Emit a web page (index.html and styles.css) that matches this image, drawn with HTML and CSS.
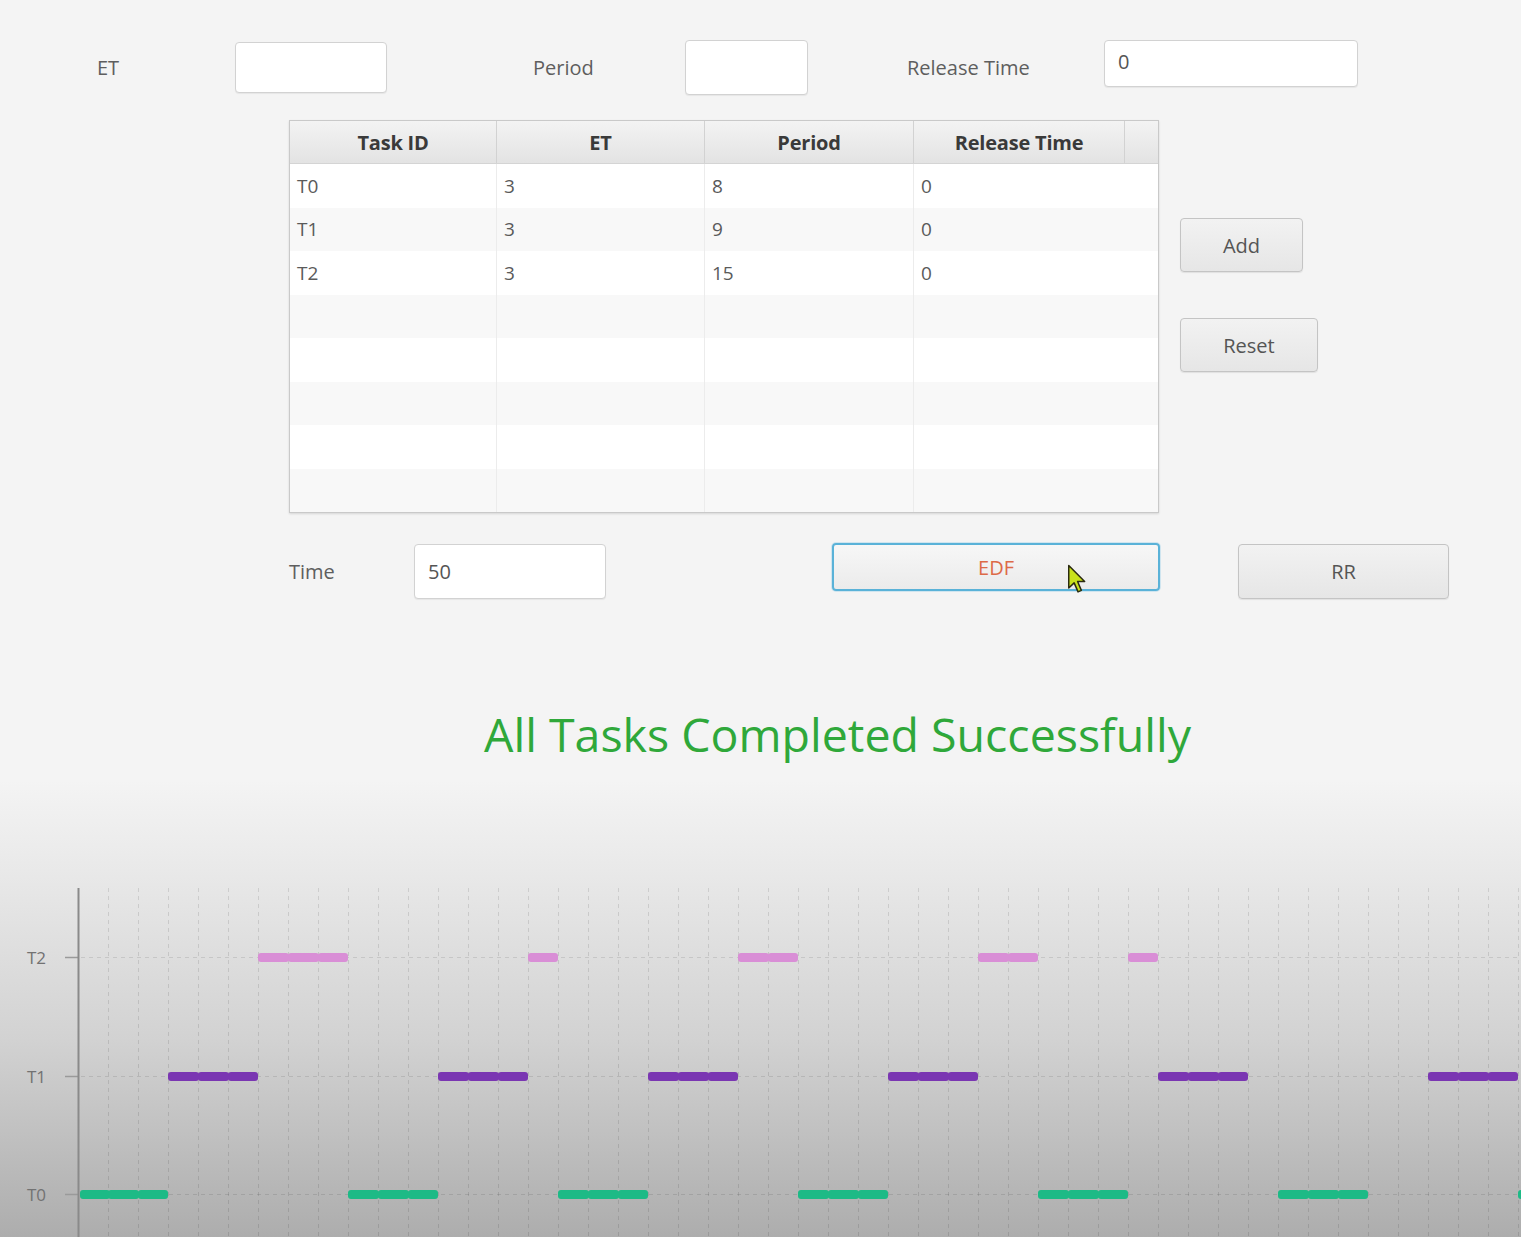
FILE: index.html
```html
<!DOCTYPE html>
<html>
<head>
<meta charset="utf-8">
<title>EDF Scheduler</title>
<link rel="stylesheet" href="styles.css">
</head>
<body>
<div class="app">
  <div class="row-top">
    <span class="lbl lbl-et">ET</span>
    <div class="field f-et"></div>
    <span class="lbl lbl-period">Period</span>
    <div class="field f-period"></div>
    <span class="lbl lbl-release">Release Time</span>
    <div class="field f-release">0</div>
  </div>

  <div class="row-table">
    <div class="table">
      <div class="thead">
        <div class="th">Task ID</div>
        <div class="th">ET</div>
        <div class="th">Period</div>
        <div class="th">Release Time</div>
        <div class="th th-fill"></div>
      </div>
      <div class="tr"><div class="td">T0</div><div class="td">3</div><div class="td">8</div><div class="td">0</div></div>
      <div class="tr odd"><div class="td">T1</div><div class="td">3</div><div class="td">9</div><div class="td">0</div></div>
      <div class="tr"><div class="td">T2</div><div class="td">3</div><div class="td">15</div><div class="td">0</div></div>
      <div class="tr odd"><div class="td"></div><div class="td"></div><div class="td"></div><div class="td"></div></div>
      <div class="tr"><div class="td"></div><div class="td"></div><div class="td"></div><div class="td"></div></div>
      <div class="tr odd"><div class="td"></div><div class="td"></div><div class="td"></div><div class="td"></div></div>
      <div class="tr"><div class="td"></div><div class="td"></div><div class="td"></div><div class="td"></div></div>
      <div class="tr odd"><div class="td"></div><div class="td"></div><div class="td"></div><div class="td"></div></div>
    </div>
    <div class="side">
      <button class="btn btn-add">Add</button>
      <button class="btn btn-reset">Reset</button>
    </div>
  </div>

  <div class="row-time">
    <span class="lbl lbl-time">Time</span>
    <div class="field f-time">50</div>
    <div class="edf-wrap">
      <button class="btn btn-edf">EDF</button>
      <svg class="cursor" width="20" height="30" viewBox="0 0 13 20">
        <path d="M1 1 L1 16 L4.6 12.6 L7.2 18.6 L9.4 17.6 L6.9 11.7 L11.6 11.7 Z" fill="#c9e21b" stroke="#2a2a10" stroke-width="1" stroke-linejoin="round"/>
      </svg>
    </div>
    <button class="btn btn-rr">RR</button>
  </div>

  <div class="title">All Tasks Completed Successfully</div>

  <svg class="chart" width="1521" height="377" viewBox="0 860 1521 377">
    <defs>
      <pattern id="vgrid" x="78" y="0" width="30" height="8" patternUnits="userSpaceOnUse">
        <rect x="0" y="0" width="1" height="4" fill="rgba(0,0,0,0.11)"/>
      </pattern>
    </defs>
    <rect x="100" y="888" width="1421" height="349" fill="url(#vgrid)"/>
    <g stroke="rgba(0,0,0,0.10)" stroke-width="1" stroke-dasharray="4 4">
      <line x1="65" y1="957.5" x2="1521" y2="957.5"/>
      <line x1="65" y1="1076.5" x2="1521" y2="1076.5"/>
      <line x1="65" y1="1194.5" x2="1521" y2="1194.5"/>
    </g>
    <g stroke="#9a9a9a" stroke-width="1.5">
      <line x1="65" y1="957.5" x2="78" y2="957.5"/>
      <line x1="65" y1="1076.5" x2="78" y2="1076.5"/>
      <line x1="65" y1="1194.5" x2="78" y2="1194.5"/>
    </g>
    <line x1="78.5" y1="888" x2="78.5" y2="1237" stroke="#8a8a8a" stroke-width="2"/>
    <g class="cat" font-family="'Open Sans', sans-serif" font-size="17" fill="#727272">
      <text x="27" y="964">T2</text>
      <text x="27" y="1083">T1</text>
      <text x="27" y="1201">T0</text>
    </g>
    <!-- T2 bars (pink) -->
    <g fill="#d98ed6">
      <rect x="258" y="953" width="31" height="9" rx="3"/><rect x="288" y="953" width="31" height="9" rx="3"/><rect x="318" y="953" width="30" height="9" rx="3"/>
      <rect x="528" y="953" width="30" height="9" rx="3"/>
      <rect x="738" y="953" width="31" height="9" rx="3"/><rect x="768" y="953" width="30" height="9" rx="3"/>
      <rect x="978" y="953" width="31" height="9" rx="3"/><rect x="1008" y="953" width="30" height="9" rx="3"/>
      <rect x="1128" y="953" width="30" height="9" rx="3"/>
    </g>
    <!-- T1 bars (purple) -->
    <g fill="#7a36b2">
      <rect x="168" y="1072" width="31" height="9" rx="3"/><rect x="198" y="1072" width="31" height="9" rx="3"/><rect x="228" y="1072" width="30" height="9" rx="3"/>
      <rect x="438" y="1072" width="31" height="9" rx="3"/><rect x="468" y="1072" width="31" height="9" rx="3"/><rect x="498" y="1072" width="30" height="9" rx="3"/>
      <rect x="648" y="1072" width="31" height="9" rx="3"/><rect x="678" y="1072" width="31" height="9" rx="3"/><rect x="708" y="1072" width="30" height="9" rx="3"/>
      <rect x="888" y="1072" width="31" height="9" rx="3"/><rect x="918" y="1072" width="31" height="9" rx="3"/><rect x="948" y="1072" width="30" height="9" rx="3"/>
      <rect x="1158" y="1072" width="31" height="9" rx="3"/><rect x="1188" y="1072" width="31" height="9" rx="3"/><rect x="1218" y="1072" width="30" height="9" rx="3"/>
      <rect x="1428" y="1072" width="31" height="9" rx="3"/><rect x="1458" y="1072" width="31" height="9" rx="3"/><rect x="1488" y="1072" width="30" height="9" rx="3"/>
    </g>
    <!-- T0 bars (green) -->
    <g fill="#1dba86">
      <rect x="80" y="1190" width="30" height="9" rx="3"/><rect x="108" y="1190" width="31" height="9" rx="3"/><rect x="138" y="1190" width="30" height="9" rx="3"/>
      <rect x="348" y="1190" width="31" height="9" rx="3"/><rect x="378" y="1190" width="31" height="9" rx="3"/><rect x="408" y="1190" width="30" height="9" rx="3"/>
      <rect x="558" y="1190" width="31" height="9" rx="3"/><rect x="588" y="1190" width="31" height="9" rx="3"/><rect x="618" y="1190" width="30" height="9" rx="3"/>
      <rect x="798" y="1190" width="31" height="9" rx="3"/><rect x="828" y="1190" width="31" height="9" rx="3"/><rect x="858" y="1190" width="30" height="9" rx="3"/>
      <rect x="1038" y="1190" width="31" height="9" rx="3"/><rect x="1068" y="1190" width="31" height="9" rx="3"/><rect x="1098" y="1190" width="30" height="9" rx="3"/>
      <rect x="1278" y="1190" width="31" height="9" rx="3"/><rect x="1308" y="1190" width="31" height="9" rx="3"/><rect x="1338" y="1190" width="30" height="9" rx="3"/>
      <rect x="1518" y="1190" width="31" height="9" rx="3"/>
    </g>
  </svg>
</div>
</body>
</html>
```

FILE: styles.css
```css
html, body {
  margin: 0;
  padding: 0;
}

body {
  width: 1521px;
  height: 1237px;
  overflow: hidden;
  font-family: "Open Sans", "Noto Sans", sans-serif;
  color: #555;
  background: linear-gradient(to bottom, #f4f4f4 0px, #f4f4f4 780px, #e9e9e9 870px, #d2d2d2 1040px, #adadad 1237px);
}

.app {
  display: flex;
  flex-direction: column;
  position: relative;
}

.lbl {
  font-size: 20px;
  color: #5e5e5e;
  font-stretch: 94%;
}

.field {
  box-sizing: border-box;
  background: #fff;
  border: 1px solid #d2d2d2;
  border-radius: 4px;
  box-shadow: 0 1px 1px rgba(0,0,0,0.06);
  font-size: 20px;
  color: #555;
  display: flex;
  align-items: center;
  padding-left: 13px;
}

/* top row */
.row-top {
  display: flex;
  align-items: center;
  margin-top: 40px;
  height: 55px;
  padding-left: 97px;
}
.lbl-et { width: 138px; }
.f-et { width: 152px; height: 51px; }
.lbl-period { margin-left: 146px; width: 152px; }
.f-period { width: 123px; height: 55px; }
.lbl-release { margin-left: 99px; width: 197px; }
.f-release { width: 254px; height: 47px; align-self: flex-start; padding-bottom: 4px; }

/* table row */
.row-table {
  display: flex;
  margin-top: 25px;
  padding-left: 289px;
}

.table {
  box-sizing: border-box;
  width: 870px;
  height: 393px;
  border: 1px solid #c9c9c9;
  background: #fff;
  box-shadow: 0 1px 2px rgba(0,0,0,0.12);
}

.thead {
  display: grid;
  grid-template-columns: 207px 208px 209px 211px 1fr;
  height: 43px;
  background: linear-gradient(to bottom, #f3f3f3, #e3e3e3);
  border-bottom: 1px solid #d4d4d4;
  box-sizing: border-box;
}
.th {
  display: flex;
  align-items: center;
  justify-content: center;
  font-weight: 700;
  font-size: 20px;
  color: #3a3a3a;
  border-right: 1px solid #d2d2d2;
  letter-spacing: -0.2px;
}
.th-fill { border-right: none; }

.tr {
  display: grid;
  grid-template-columns: 207px 208px 209px 1fr;
  height: 43.5px;
  background: #fff;
}
.tr.odd { background: #f8f8f8; }
.td {
  display: flex;
  align-items: center;
  padding-left: 7px;
  font-size: 19px;
  color: #5a5a5a;
  border-right: 1px solid #ececec;
}
.td:last-child { border-right: none; }

.side {
  display: flex;
  flex-direction: column;
  align-items: flex-start;
  padding-left: 21px;
  padding-top: 98px;
  gap: 46px;
}

.btn {
  box-sizing: border-box;
  font-family: "Open Sans", "Noto Sans", sans-serif;
  font-size: 20px;
  color: #555;
  background: linear-gradient(to bottom, #f2f2f2, #e6e6e6);
  border: 1px solid #c4c4c4;
  border-radius: 4px;
  box-shadow: 0 1px 1px rgba(0,0,0,0.08);
  padding: 0;
  font-stretch: 94%;
}
.btn-add { width: 123px; height: 54px; }
.btn-reset { width: 138px; height: 54px; }

/* time row */
.row-time {
  display: flex;
  align-items: center;
  margin-top: 30px;
  height: 56px;
  padding-left: 289px;
}
.lbl-time { width: 125px; }
.f-time { width: 192px; height: 55px; }
.edf-wrap {
  position: relative;
  margin-left: 226px;
  align-self: flex-start;
}
.btn-edf {
  width: 328px;
  height: 48px;
  border: 2px solid #5ab2d8;
  border-radius: 4px;
  color: #dd6a48;
  background: linear-gradient(to bottom, #f7f7f7, #ebebeb);
  box-shadow: 0 0 0 1px rgba(140, 200, 230, 0.35);
  display: block;
}
.cursor {
  position: absolute;
  left: 235px;
  top: 21px;
}
.btn-rr { width: 211px; height: 55px; margin-left: 78px; }

/* title */
.title {
  margin-top: 100px;
  height: 70px;
  line-height: 70px;
  text-align: center;
  padding-left: 154px;
  font-size: 46.5px;
  color: #2fa83a;
  font-stretch: 92%;
}

.chart {
  display: block;
  margin-top: 91px;
}
```
